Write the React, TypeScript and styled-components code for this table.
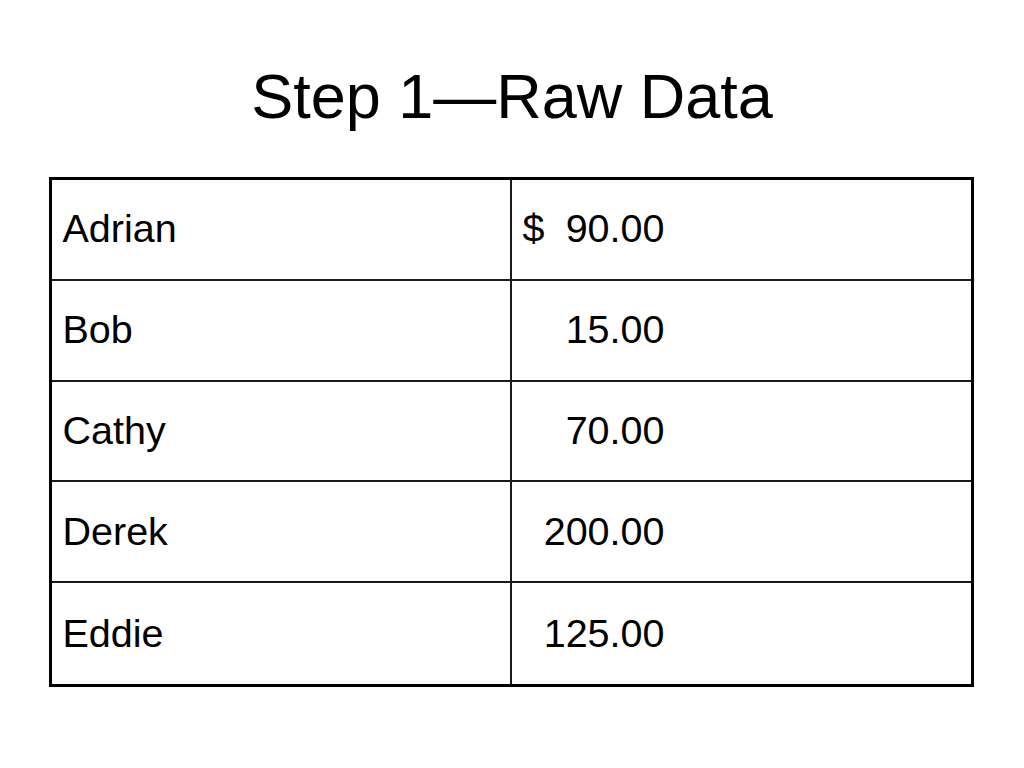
import React from "react";
import styled, { createGlobalStyle } from "styled-components";

const GlobalStyle = createGlobalStyle`
  html, body {
    margin: 0;
    padding: 0;
    background: #ffffff;
  }
  body {
    font-family: "Liberation Sans", Arial, sans-serif;
    color: #000000;
  }
`;

const Slide = styled.div`
  width: 1024px;
  height: 768px;
  display: flex;
  flex-direction: column;
  align-items: center;
  box-sizing: border-box;
  padding-top: 65px;
`;

const Title = styled.h1`
  margin: 0;
  font-weight: normal;
  font-size: 63px;
  line-height: 63px;
  height: 63px;
  white-space: nowrap;
`;

const Table = styled.div`
  margin-top: 49px;
  margin-left: -2px;
  width: 925px;
  height: 510px;
  box-sizing: border-box;
  border: 3px solid #000;
  display: grid;
  grid-template-columns: 460px 1fr;
  grid-template-rows: repeat(5, 1fr);
`;

const Cell = styled.div<{ $last: boolean; $left: boolean }>`
  display: flex;
  align-items: center;
  box-sizing: border-box;
  padding-left: 11px;
  font-size: 39.5px;
  border-bottom: ${(p) => (p.$last ? "none" : "2px solid #1a1a1a")};
  border-right: ${(p) => (p.$left ? "2px solid #1a1a1a" : "none")};
  padding-bottom: 1px;
`;

const Amount = styled.div`
  width: 142px;
  display: flex;
  justify-content: space-between;
`;

const Currency = styled.span`
  width: 20px;
`;

const Value = styled.span`
  text-align: right;
`;

const rows = [
  { name: "Adrian", value: "90.00", dollar: true },
  { name: "Bob", value: "15.00", dollar: false },
  { name: "Cathy", value: "70.00", dollar: false },
  { name: "Derek", value: "200.00", dollar: false },
  { name: "Eddie", value: "125.00", dollar: false },
];

export default function App() {
  return (
    <>
      <GlobalStyle />
      <Slide>
        <Title>Step 1—Raw Data</Title>
        <Table>
          {rows.map((r, i) => {
            const last = i === rows.length - 1;
            return (
              <React.Fragment key={r.name}>
                <Cell $last={last} $left>
                  {r.name}
                </Cell>
                <Cell $last={last} $left={false}>
                  <Amount>
                    <Currency>{r.dollar ? "$" : ""}</Currency>
                    <Value>{r.value}</Value>
                  </Amount>
                </Cell>
              </React.Fragment>
            );
          })}
        </Table>
      </Slide>
    </>
  );
}
